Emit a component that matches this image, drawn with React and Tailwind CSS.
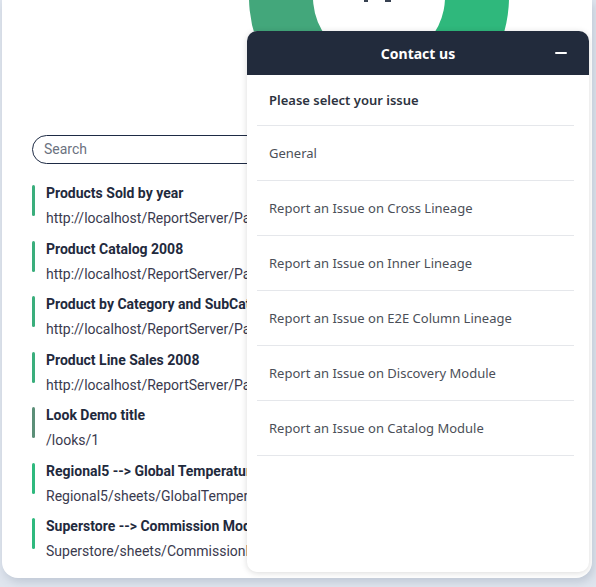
import React from 'react';

const reports = [
  { title: 'Products Sold by year', path: 'http://localhost/ReportServer/Pages/ReportViewer.aspx', bar: 'bg-[#3aae7c]' },
  { title: 'Product Catalog 2008', path: 'http://localhost/ReportServer/Pages/ReportViewer.aspx', bar: 'bg-[#3aae7c]' },
  { title: 'Product by Category and SubCategory', path: 'http://localhost/ReportServer/Pages/ReportViewer.aspx', bar: 'bg-[#3aae7c]' },
  { title: 'Product Line Sales 2008', path: 'http://localhost/ReportServer/Pages/ReportViewer.aspx', bar: 'bg-[#3aae7c]' },
  { title: 'Look Demo title', path: '/looks/1', bar: 'bg-[#5b8f78]' },
  { title: 'Regional5 --> Global Temperatures', path: 'Regional5/sheets/GlobalTemperatures', bar: 'bg-[#2fb97e]' },
  { title: 'Superstore --> Commission Model', path: 'Superstore/sheets/CommissionModel', bar: 'bg-[#2fb97e]' },
];

const issues = [
  'General',
  'Report an Issue on Cross Lineage',
  'Report an Issue on Inner Lineage',
  'Report an Issue on E2E Column Lineage',
  'Report an Issue on Discovery Module',
  'Report an Issue on Catalog Module',
];

function Donut() {
  // centre (132, -3), outer r 130, inner r 66
  const cx = 132, cy = -3, ro = 130, ri = 66;
  const pt = (r, a) => [cx + r * Math.cos(a), cy + r * Math.sin(a)];
  const seg = (a0, a1) => {
    const [x0, y0] = pt(ro, a0);
    const [x1, y1] = pt(ro, a1);
    const [x2, y2] = pt(ri, a1);
    const [x3, y3] = pt(ri, a0);
    const large = a1 - a0 > Math.PI ? 1 : 0;
    return `M${x0} ${y0} A${ro} ${ro} 0 ${large} 1 ${x1} ${y1} L${x2} ${y2} A${ri} ${ri} 0 ${large} 0 ${x3} ${y3} Z`;
  };
  const split = Math.PI * 0.79;
  return (
    <svg width="264" height="40" viewBox="0 0 264 40">
      <path d={seg(-Math.PI * 0.5, split)} fill="#2fb87c" />
      <path d={seg(split, Math.PI * 1.5)} fill="#43a77b" />
      <line x1={pt(ri, split)[0]} y1={pt(ri, split)[1]} x2={pt(ro, split)[0]} y2={pt(ro, split)[1]} stroke="#ffffff" strokeWidth="1.5" />
      <rect x="117" y="0" width="4" height="2" fill="#374151" />
      <rect x="138" y="0" width="6" height="2" fill="#374151" />
    </svg>
  );
}

export default function App() {
  return (
    <div className="min-h-screen bg-[#dfe5ee] pl-[2px] pr-[4px] pb-[9px]" style={{ fontFamily: 'Roboto, sans-serif' }}>
      <div className="relative h-[578px] bg-white rounded-b-2xl shadow-[2px_4px_8px_rgba(100,116,139,0.25)] overflow-hidden">
        <div className="h-[135px] pl-[245px]">
          <Donut />
        </div>

        <div className="pl-[30px]">
          <div className="w-[320px] h-[29px] rounded-full border border-[#1e2b45] flex items-center px-[11px] text-[14px] text-[#6b7280]">
            Search
          </div>

          <div className="mt-[20px] flex flex-col gap-[11.5px]">
            {reports.map((r) => (
              <div key={r.title} className="flex gap-[11px]">
                <div className={`w-[3px] h-[31px] mt-[1px] rounded-sm ${r.bar}`} />
                <div className="flex flex-col leading-[19px] whitespace-nowrap">
                  <div className="text-[14px] font-bold text-[#1f2a3d]">{r.title}</div>
                  <div className="text-[14px] text-[#3a3a4e] mt-[6px]">{r.path}</div>
                </div>
              </div>
            ))}
          </div>
        </div>

        <div
          className="absolute left-[245px] top-[31px] w-[342px] h-[541px] bg-white rounded-[10px] shadow-[0_1px_6px_rgba(0,0,0,0.15)] overflow-hidden"
          style={{ fontFamily: '"Noto Sans", sans-serif' }}
        >
          <div className="h-[44px] bg-[#222b3c] flex items-center justify-center relative">
            <span className="text-white text-[14px] font-bold">Contact us</span>
            <div className="absolute right-[22px] top-[21px] w-[12px] h-[2px] bg-white rounded-sm" />
          </div>
          <div className="pl-[10px] pr-[15px]">
            <div className="h-[51px] pt-[2px] flex items-center px-[12px] border-b border-[#e5e7eb] text-[13px] font-semibold text-[#2d3340]">
              Please select your issue
            </div>
            {issues.map((t) => (
              <div key={t} className="h-[55px] pt-[2px] flex items-center px-[12px] border-b border-[#e5e7eb] text-[13px] text-[#4b4f58]">
                {t}
              </div>
            ))}
          </div>
        </div>
      </div>
    </div>
  );
}
